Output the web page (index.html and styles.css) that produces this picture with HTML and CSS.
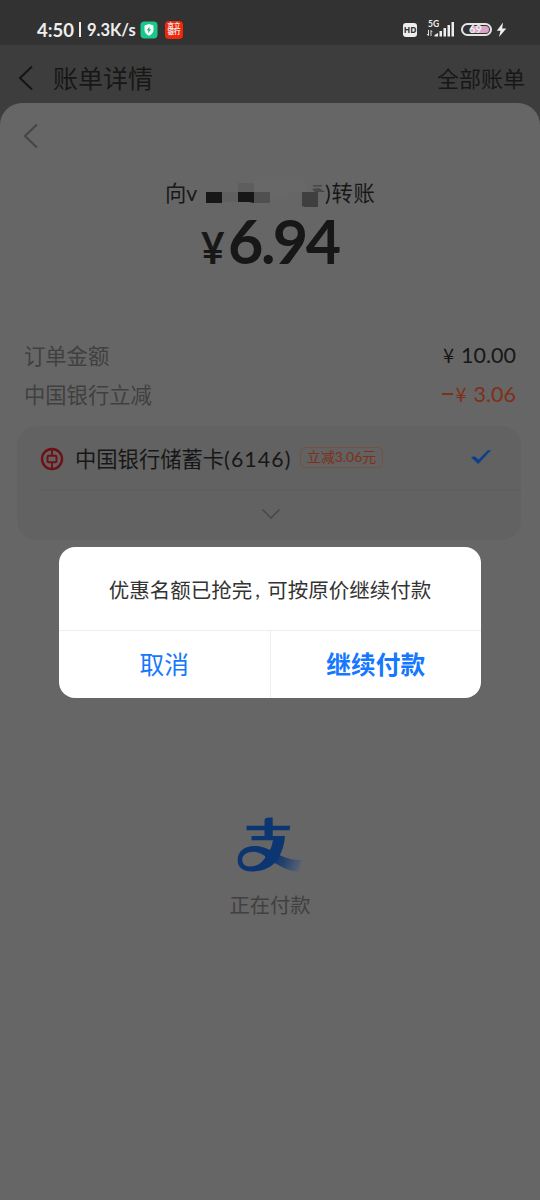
FILE: index.html
```html
<!DOCTYPE html>
<html lang="zh-CN">
<head>
<meta charset="utf-8">
<title>账单详情</title>
<link rel="stylesheet" href="styles.css">
</head>
<body>
<div class="screen">
  <div class="status">
    <span class="clock">4:50</span><span class="bar"></span><span class="speed">9.3K/s</span>
    <svg class="shield" width="18" height="18" viewBox="0 0 18 18"><rect x=".5" y=".5" width="17" height="17" rx="4" fill="#19c88a"/><path d="M9 3l4.500 1.600v4.200c0 2.800-1.800 4.700-4.500 6-2.700-1.300-4.500-3.200-4.500-6V4.600z" fill="#f4fff9"/><path d="M9.600 5.500L6.700 9.300h1.800L8 12.200l3.200-4H9.300z" fill="#19b67d"/></svg>
    <span class="promo"><span>京立</span><span>银行</span></span>
    <span class="spacer"></span>
    <span class="hd">HD</span>
    <span class="signal">
      <span class="net">5G</span>
      <svg width="29" height="15" viewBox="0 0 29 15"><g fill="#eee"><path d="M8.500 14.500V13l3.500-2v3.500z"/><rect x="13.500" y="9" width="2.500" height="5.500"/><rect x="17.500" y="6" width="2.500" height="8.500"/><rect x="21.500" y="3" width="2.500" height="11.500"/><rect x="25.500" y="0" width="2.500" height="14.500"/></g><path d="M2.500 8v5.500M1 12l1.500 1.800M5 14V8.500l1.300 1.600" stroke="#ddd" fill="none"/></svg>
    </span>
    <span class="battery"><span class="charge"></span><span class="percent">69</span></span>
    <svg class="bolt" width="11" height="16" viewBox="0 0 11 16"><path d="M7 .5L.8 8.800h3.700L3 15l7.300-8.500H6.200z" fill="#eee"/></svg>
  </div>
  <div class="nav">
    <svg width="16" height="26" viewBox="0 0 16 26"><path d="M14 1.500L2 13l12 11.500" fill="none" stroke="#151515" stroke-width="2"/></svg>
    <span class="title">账单详情</span>
    <span class="all">全部账单</span>
  </div>
  <div class="sheet">
    <svg class="back" width="16" height="26" viewBox="0 0 16 26"><path d="M14 1.500L2 13l12 11.500" fill="none" stroke="#464646" stroke-width="2.200"/></svg>
    <div class="payee">
      <span>向v</span>
      <svg width="128" height="30" viewBox="0 0 128 30"><path fill="#686868" d="M57 2h51v13H90v5H74v-5H57z"/><path fill="#5e5e5e" d="M41 6h16v9H41z"/><path fill="#171717" d="M9 15h16v11H9zM41 15h16v11l-5-1H41z"/><path fill="#505050" d="M57 15h16v11H57z"/><path fill="#606060" d="M25 15h16v10H25z"/><path fill="#3f3f3f" d="M105 15h16v15h-13l-3-1z"/><path fill="#474747" d="M116 8h9v1.500h-9zM115 12l7-1 6 4h-10z"/></svg>
      <span>)转账</span>
    </div>
    <div class="amount"><span class="yen">¥</span><span class="value">6.94</span></div>
    <div class="row"><span class="label">订单金额</span><span class="money"><i>¥</i>10.00</span></div>
    <div class="row"><span class="label">中国银行立减</span><span class="money off"><b></b><i>¥</i>3.06</span></div>
    <div class="card">
      <div class="bank">
        <svg width="24" height="24" viewBox="0 0 24 24" fill="none" stroke="#6e1014"><circle cx="12" cy="12" r="10" stroke-width="2.400"/><rect x="7.500" y="8.700" width="9" height="6.600" rx="1" stroke-width="2"/><path d="M12 2v6.500M12 15.500V22" stroke-width="1.800"/></svg>
        <span class="bankname">中国银行储蓄卡<em>(6146)</em></span>
        <span class="badge">立减3.06元</span>
        <svg class="tick" width="22" height="16" viewBox="0 0 22 16"><path d="M1 8.200l3.500-1 4.200 3.300L17.500 1.500l3.800-.500L8.200 15z" fill="#0b3f8e"/></svg>
      </div>
      <div class="more"><svg width="20" height="12" viewBox="0 0 20 12"><path d="M1.500 1.500L10 10l8.500-8.500" fill="none" stroke="#464646" stroke-width="1.400"/></svg></div>
    </div>
    <div class="paying">
      <svg width="66" height="56" viewBox="0 0 66 56">
        <defs><linearGradient id="tail" x1="36" y1="38" x2="64" y2="48" gradientUnits="userSpaceOnUse"><stop offset="0" stop-color="#0b3672"/><stop offset=".4" stop-color="#253f6c"/><stop offset="1" stop-color="#596475"/></linearGradient></defs>
        <path d="M28 31.500C42 37 48 43 64 43Q64.500 51 61 54.500C52 54.500 44 50 28 40z" fill="url(#tail)"/>
        <path d="M27.500 3Q27.500.8 32 .5h3.700v8.200H53.300L52.500 13.200H35.700V19H48C47.500 27 45 35 41 42C35 51 25 54.500 14.500 54.500C6 54.500.7 50.500.7 43C.7 34 8 29 17 29C24 29 28 31 33 33Q35 29 36 23.200H14.500V19h13v-5.800H9.500V8.700h18zM5.300 42.500C5.300 47 8 49.500 13 49.500C21 49.500 25.500 45 29 39.500C25 37 21 34.700 17 34.700C10 34.700 5.300 37.500 5.300 42.500z" fill="#0b3672" fill-rule="evenodd"/>
      </svg>
      <span>正在付款</span>
    </div>
  </div>
  <div class="dialog">
    <div class="message">优惠名额已抢完<span class="comma">,</span>可按原价继续付款</div>
    <div class="actions"><span class="cancel">取消</span><span class="confirm">继续付款</span></div>
  </div>
</div>
</body>
</html>
```
FILE: styles.css
```css
* { box-sizing: border-box; }
body { margin: 0; font-family: Lato, "Noto Sans CJK SC", sans-serif; }
svg { display: block; flex: none; }
.screen { position: relative; width: 540px; height: 1200px; background: #3d3d3d; overflow: hidden; white-space: nowrap; color: #171717; }
.status { height: 45px; background: #323232; color: #eee; display: flex; align-items: center; padding: 14px 33px 0 37px; font-weight: 700; }
.clock { font-size: 18.500px; width: 39px; }
.bar { width: 2px; height: 15px; background: #eee; margin: 0 6px 0 3px; }
.speed { font-size: 16.500px; width: 49px; }
.shield { margin-left: 4px; }
.promo { width: 18px; height: 18px; border-radius: 4px; background: #f0280a; margin-left: 7px; padding-top: 2px; font-size: 6.500px; line-height: 6.500px; display: flex; flex-direction: column; align-items: center; }
.spacer { flex: 1; }
.hd { width: 14px; height: 14px; border-radius: 3px; background: #eee; color: #323232; font: 700 8.500px/14px "Noto Sans", sans-serif; text-align: center; margin-right: 1px; }
.signal { position: relative; width: 29px; margin-left: 8px; }
.net { position: absolute; left: 2px; top: -2px; font-size: 8.500px; line-height: 9px; }
.battery { position: relative; width: 31px; height: 13px; margin-left: 6px; border: 2px solid #e4e4e4; border-radius: 7px; padding: 1px; }
.charge { display: block; width: 18px; height: 7px; margin-left: 7px; background: #d9a4c6; border-radius: 1px 4px 4px 1px; }
.percent { position: absolute; left: 6px; top: -1px; font-size: 11px; line-height: 10px; }
.bolt { margin-left: 4px; }
.nav { height: 58px; display: flex; align-items: center; padding: 7px 15px 0 18px; }
.title { font-size: 25px; line-height: 36px; margin: 0 0 0 19px; }
.all { font-size: 22px; line-height: 32px; margin: 2px 0 0 auto; }
.sheet { height: 1097px; background: #666; border-radius: 22px 22px 0 0; padding: 20px 17px 0; display: flex; flex-direction: column; }
.back { margin-left: 6px; }
.payee { display: flex; align-items: center; height: 30px; margin: 28px 0 0 148px; font-size: 21.300px; }
.payee span { margin-top: -1px; }
.payee span:first-child { width: 32px; }
.payee span:last-child { letter-spacing: .700px; }
.amount { display: flex; align-items: baseline; height: 74px; margin: -4px 0 0 184px; line-height: 76px; }
.yen { font-size: 44px; font-weight: 700; width: 27px; transform: scaleX(.92); transform-origin: left; }
.value { font-size: 61px; font-weight: 700; letter-spacing: -2.500px; }
.row { display: flex; justify-content: space-between; align-items: center; height: 39px; padding: 0 7px; font-size: 21.300px; }
.amount + .row { margin-top: 58px; }
.label { color: #404040; }
.money { display: flex; align-items: center; font-size: 21.500px; }
.money i { font: 20px/30px "Noto Sans CJK SC", sans-serif; margin-right: 7px; }
.money b { width: 11px; height: 2px; background: #803018; margin-right: 2px; }
.off { color: #803018; }
.card { height: 114px; width: 504px; margin-top: 13px; border-radius: 20px; background: #626262; }
.bank { height: 65px; display: flex; align-items: center; margin-left: 23px; padding-right: 29px; border-bottom: 1px solid #5d5d5d; }
.bank > svg:first-child { margin-top: 2px; }
.bankname { font-size: 21.300px; margin: -1px 0 0 11px; width: 225px; }
.bankname em { font-style: normal; letter-spacing: 1.100px; }
.badge { width: 83px; height: 21px; border: 1px solid #755144; border-radius: 5px; color: #803018; font-size: 14px; line-height: 18px; text-align: center; margin-top: -2px; }
.tick { margin: -3px 0 0 auto; }
.more { height: 46px; display: flex; justify-content: center; align-items: center; padding-left: 4px; }
.paying { margin-top: 277px; display: flex; flex-direction: column; align-items: center; gap: 17px; color: #404040; font-size: 20.300px; line-height: 30px; }
.dialog { position: absolute; left: 59px; top: 547px; width: 422px; height: 151px; background: #fff; border-radius: 16px; overflow: hidden; }
.message { height: 84px; display: flex; align-items: center; justify-content: center; border-bottom: 1px solid #eee; color: #333; font-size: 20.500px; }
.comma { width: 15px; padding-left: 3px; }
.actions { height: 67px; display: flex; color: #1677ff; font-size: 24.700px; line-height: 67px; text-align: center; }
.actions span { flex: 1; }
.confirm { border-left: 1px solid #eee; font-weight: 700; }
```
